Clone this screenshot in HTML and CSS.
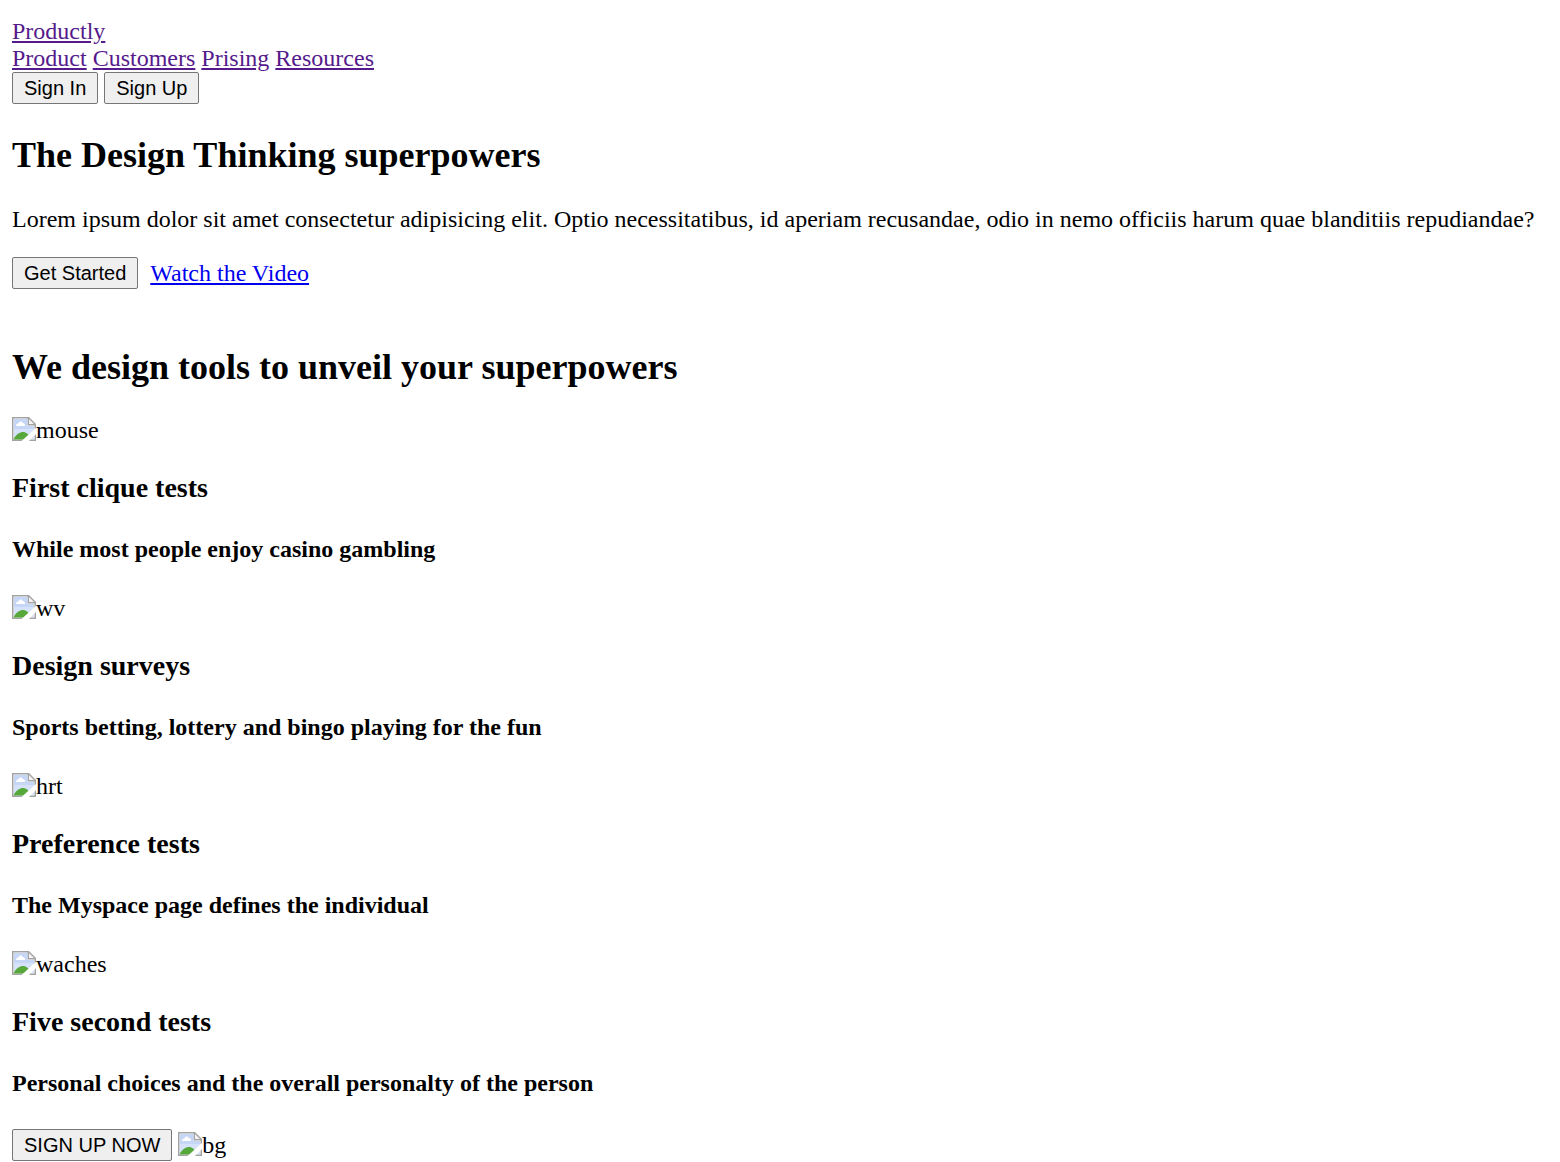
FILE: index.html
```html
<!DOCTYPE html>
<html lang="en">
<head>
<meta charset="utf-8">
<title>Productly</title>
<link rel="stylesheet" href="styles.css">
</head>
<body>
<svg class="defs" aria-hidden="true">
  <symbol id="missing" viewBox="0 0 24 24">
    <path d="M0 0h17l7 7v17H0z" fill="#a3a3a3"/>
    <path d="M1.5 1.5h14v7h7v14h-21z" fill="#fff"/>
    <path d="M2 2h13.500v7H22v13H2z" fill="#c6d6f6"/>
    <path d="M2 12h20v10H2z" fill="#d6e2fa"/>
    <path d="M4 9c0-2 1.500-2.500 2.500-2.500C7 4 10 4 10.500 6c2 0 2.500 1 2.500 3z" fill="#fff"/>
    <path d="M1.500 22.500C4 17 8 15 11 15s6 2 8 7.500z" fill="#57a83b"/>
    <path d="M17 2v5h5z" fill="#f4f4f4"/>
    <path d="M24 11v6l-7 7h-7.500z" fill="#fff"/>
  </symbol>
</svg>
<header>
  <a class="visited" href="#">Productly</a>
  <nav>
    <a class="visited" href="#">Product</a>
    <a class="visited" href="#">Customers</a>
    <a class="visited" href="#">Prising</a>
    <a class="visited" href="#">Resources</a>
  </nav>
  <div class="actions">
    <button type="button">Sign In</button>
    <button type="button">Sign Up</button>
  </div>
</header>
<main>
  <section class="hero">
    <h1>The Design Thinking superpowers</h1>
    <p>Lorem ipsum dolor sit amet consectetur adipisicing elit. Optio necessitatibus, id aperiam recusandae, odio in nemo officiis harum quae blanditiis repudiandae?</p>
    <div class="actions">
      <button type="button">Get Started</button>
      <a class="video" href="#video">Watch the Video</a>
    </div>
  </section>
  <section class="tools">
    <h2>We design tools to unveil your superpowers</h2>
    <article>
      <div class="picture"><svg class="missing"><use href="#missing"/></svg>mouse</div>
      <h3>First clique tests</h3>
      <h4>While most people enjoy casino gambling</h4>
    </article>
    <article>
      <div class="picture"><svg class="missing"><use href="#missing"/></svg>wv</div>
      <h3>Design surveys</h3>
      <h4>Sports betting, lottery and bingo playing for the fun</h4>
    </article>
    <article>
      <div class="picture"><svg class="missing"><use href="#missing"/></svg>hrt</div>
      <h3>Preference tests</h3>
      <h4>The Myspace page defines the individual</h4>
    </article>
    <article>
      <div class="picture"><svg class="missing"><use href="#missing"/></svg>waches</div>
      <h3>Five second tests</h3>
      <h4>Personal choices and the overall personalty of the person</h4>
    </article>
    <div class="actions">
      <button type="button">SIGN UP NOW</button>
      <span class="picture"><svg class="missing"><use href="#missing"/></svg>bg</span>
    </div>
  </section>
</main>
</body>
</html>
```
FILE: styles.css
```css
body {
  margin: 18px 12px 0;
  background: #fff;
  color: #000;
  font-family: "Liberation Serif", "Times New Roman", serif;
  font-size: 24px;
  line-height: 27px;
}

.defs {
  display: none;
}

a {
  color: #0000ee;
}

.visited {
  color: #551a8b;
}

button {
  box-sizing: border-box;
  height: 32px;
  margin: 0;
  padding: 0 11px;
  border: 1px solid #767676;
  border-radius: 2px;
  background: #efefef;
  color: #000;
  font-family: "Liberation Sans", Arial, sans-serif;
  font-size: 20px;
  line-height: 30px;
}

.actions {
  display: flex;
  align-items: center;
  gap: 6px;
}

.video {
  margin-left: 6px;
}

h1,
h2 {
  margin: 31px 0 30px;
  font-size: 36px;
  line-height: 41px;
}

h2 {
  margin-bottom: 29px;
}

p {
  margin: 0 0 24px;
}

.tools {
  padding-top: 27px;
}

.picture {
  display: flex;
  align-items: flex-start;
}

.missing {
  width: 24px;
  height: 24px;
}

h3 {
  margin: 28px 0 32px;
  font-size: 28px;
  line-height: 32px;
}

h4 {
  margin: 0 0 32px;
  font-size: 24px;
  line-height: 27px;
}
```
